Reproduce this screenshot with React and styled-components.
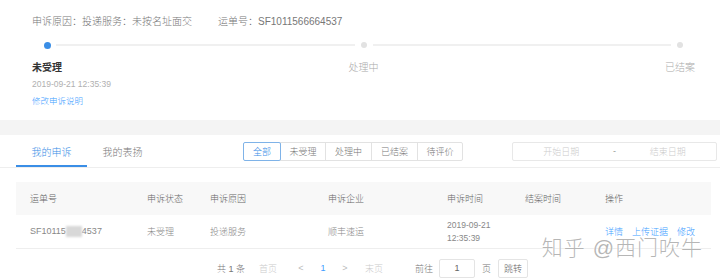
import styled, { createGlobalStyle } from 'styled-components'

const GlobalStyle = createGlobalStyle`
  body {
    margin: 0;
    background: #f4f4f4;
    font-family: "Liberation Sans", "Noto Sans CJK SC", sans-serif;
    font-weight: 300;
  }
`

const blue = '#409eff'

const Page = styled.div`
  position: relative;
  width: 720px;
  height: 280px;
  overflow: hidden;
  background: #f4f4f4;
`

const Panel = styled.section`
  height: 120px;
  background: #fff;
`

const InfoRow = styled.div`
  display: flex;
  align-items: center;
  gap: 26px;
  height: 40px;
  padding-left: 32px;
  font-size: 10px;
  color: #777;
`

const Steps = styled.div`
  display: grid;
  grid-template-columns: 18px 1fr 18px 1fr 18px;
  grid-template-rows: 10px 14px;
  row-gap: 11px;
  align-items: center;
  margin: 0 31px 0 38px;
`

const Dot = styled.span`
  justify-self: center;
  width: ${(p) => (p.$active ? 7 : 6)}px;
  height: ${(p) => (p.$active ? 7 : 6)}px;
  border-radius: 50%;
  background: ${(p) => (p.$active ? '#3a8ee6' : '#e2e2e2')};
`

const Line = styled.span`
  height: 2px;
  background: #f0f0f0;
`

const StepLabel = styled.span`
  grid-row: 2;
  grid-column: ${(p) => p.$col};
  justify-self: center;
  white-space: nowrap;
  font-size: 10px;
  line-height: 14px;
  color: ${(p) => (p.$active ? '#333' : '#aaa')};
  font-weight: ${(p) => (p.$active ? 700 : 300)};
`

const StepMeta = styled.div`
  padding-left: 32px;
`

const StepTime = styled.div`
  margin-top: 3px;
  font-size: 8.5px;
  line-height: 12px;
  color: #b0b0b0;
`

const EditLink = styled.div`
  margin-top: 5px;
  font-size: 8.5px;
  line-height: 12px;
  color: ${blue};
`

const Card = styled.section`
  height: 145px;
  margin-top: 15px;
  background: #fff;
`

const TabBar = styled.div`
  display: flex;
  align-items: center;
  height: 32px;
  border-bottom: 1px solid #eeeeee;
`

const Tab = styled.div`
  display: flex;
  align-items: center;
  justify-content: center;
  box-sizing: border-box;
  width: 71px;
  height: 32px;
  padding-top: 2px;
  margin-left: ${(p) => (p.$first ? '16px' : '0')};
  border-bottom: 2px solid ${(p) => (p.$active ? '#3a8ee6' : 'transparent')};
  font-size: 10px;
  color: ${(p) => (p.$active ? '#3a8ee6' : '#777')};
`

const FilterGroup = styled.div`
  display: flex;
  margin-left: 86px;
`

const FilterBtn = styled.div`
  position: relative;
  z-index: ${(p) => (p.$active ? 1 : 0)};
  display: flex;
  align-items: center;
  justify-content: center;
  box-sizing: border-box;
  width: ${(p) => p.$w}px;
  height: 19px;
  margin-left: -1px;
  border: 1px solid ${(p) => (p.$active ? '#7fb3e8' : '#e2e2e2')};
  border-radius: ${(p) => (p.$active ? '2px' : '0')};
  font-size: 9px;
  color: ${(p) => (p.$active ? '#3a8ee6' : '#777')};
  &:last-child {
    border-radius: 0 2px 2px 0;
  }
`

const DateRange = styled.div`
  display: flex;
  align-items: center;
  box-sizing: border-box;
  width: 205px;
  height: 19px;
  margin: 0 3px 0 auto;
  border: 1px solid #e8e8e8;
  border-radius: 2px;
  font-size: 9px;
`

const DateInput = styled.span`
  flex: 1;
  text-align: center;
  color: #cccccc;
`

const DateSep = styled.span`
  width: 10px;
  text-align: center;
  color: #999;
`

const Table = styled.div`
  margin: 14px 9px 0 16px;
`

const Row = styled.div`
  display: grid;
  grid-template-columns: 117px 63px 118px 119px 78px 80px 1fr;
  align-items: center;
  height: 33px;
  padding-left: 14px;
  background: ${(p) => (p.$head ? '#f8f8f8' : '#fff')};
  border-bottom: ${(p) => (p.$head ? 'none' : '1px solid #eeeeee')};
  font-size: 9px;
  color: ${(p) => (p.$head ? '#666' : '#888')};
`

const Masked = styled.span`
  display: inline-block;
  width: 16px;
  height: 11px;
  vertical-align: middle;
  background: #d8d8d8;
  filter: blur(0.8px);
`

const TimeCell = styled.div`
  font-size: 8.5px;
  line-height: 13px;
`

const Actions = styled.div`
  display: flex;
  gap: 9px;
  line-height: 12px;
  color: ${blue};
`

const Pager = styled.div`
  display: flex;
  align-items: center;
  height: 20px;
  margin-top: 9px;
  padding-left: 217px;
  font-size: 9px;
  color: #777;
`

const PagerItem = styled.span`
  width: ${(p) => p.$w}px;
  margin-left: ${(p) => p.$ml || 0}px;
  text-align: ${(p) => p.$align || 'center'};
  color: ${(p) => p.$color || '#777'};
  white-space: nowrap;
`

const PageInput = styled.div`
  display: flex;
  align-items: center;
  justify-content: center;
  box-sizing: border-box;
  width: 36px;
  height: 19px;
  margin-left: 4px;
  border: 1px solid #e4e4e4;
  border-radius: 2px;
  color: #666;
`

const JumpBtn = styled.div`
  display: flex;
  align-items: center;
  justify-content: center;
  box-sizing: border-box;
  width: 30px;
  height: 19px;
  margin-left: 6px;
  border: 1px solid #e4e4e4;
  border-radius: 2px;
  color: #666;
`

const Watermark = styled.div`
  position: absolute;
  right: 17px;
  top: 239px;
  font-size: 21px;
  line-height: 18px;
  letter-spacing: 1px;
  color: rgba(110, 110, 110, 0.5);
  text-shadow: 0 0 2px #fff, 0 0 1px #fff;
  white-space: nowrap;
`

const filters = [
  { label: '全部', w: 38, active: true },
  { label: '未受理', w: 46 },
  { label: '处理中', w: 47 },
  { label: '已结案', w: 47 },
  { label: '待评价', w: 46 },
]

export default function App() {
  return (
    <Page>
      <GlobalStyle />
      <Panel>
        <InfoRow>
          <span>申诉原因：投递服务：未按名址面交</span>
          <span>运单号：SF1011566664537</span>
        </InfoRow>
        <Steps>
          <Dot $active />
          <Line />
          <Dot />
          <Line />
          <Dot />
          <StepLabel $col={1} $active>未受理</StepLabel>
          <StepLabel $col={3}>处理中</StepLabel>
          <StepLabel $col={5}>已结案</StepLabel>
        </Steps>
        <StepMeta>
          <StepTime>2019-09-21 12:35:39</StepTime>
          <EditLink>修改申诉说明</EditLink>
        </StepMeta>
      </Panel>

      <Card>
        <TabBar>
          <Tab $first $active>我的申诉</Tab>
          <Tab>我的表扬</Tab>
          <FilterGroup>
            {filters.map((f) => (
              <FilterBtn key={f.label} $w={f.w} $active={f.active}>
                {f.label}
              </FilterBtn>
            ))}
          </FilterGroup>
          <DateRange>
            <DateInput>开始日期</DateInput>
            <DateSep>-</DateSep>
            <DateInput>结束日期</DateInput>
          </DateRange>
        </TabBar>

        <Table>
          <Row $head>
            <span>运单号</span>
            <span>申诉状态</span>
            <span>申诉原因</span>
            <span>申诉企业</span>
            <span>申诉时间</span>
            <span>结案时间</span>
            <span>操作</span>
          </Row>
          <Row>
            <span>
              SF10115<Masked />4537
            </span>
            <span>未受理</span>
            <span>投递服务</span>
            <span>顺丰速运</span>
            <TimeCell>
              2019-09-21
              <br />
              12:35:39
            </TimeCell>
            <span />
            <Actions>
              <span>详情</span>
              <span>上传证据</span>
              <span>修改</span>
            </Actions>
          </Row>
        </Table>

        <Pager>
          <PagerItem $w={30} $align="left">共 1 条</PagerItem>
          <PagerItem $w={42} $color="#cccccc">首页</PagerItem>
          <PagerItem $w={24} $color="#bbb">&lt;</PagerItem>
          <PagerItem $w={20} $color={blue}>1</PagerItem>
          <PagerItem $w={24} $color="#bbb">&gt;</PagerItem>
          <PagerItem $w={34} $color="#cccccc">末页</PagerItem>
          <PagerItem $w={20} $ml={24} $align="left">前往</PagerItem>
          <PageInput>1</PageInput>
          <PagerItem $w={10} $ml={7} $align="left">页</PagerItem>
          <JumpBtn>跳转</JumpBtn>
        </Pager>
      </Card>

      <Watermark>知乎 @西门吹牛</Watermark>
    </Page>
  )
}
